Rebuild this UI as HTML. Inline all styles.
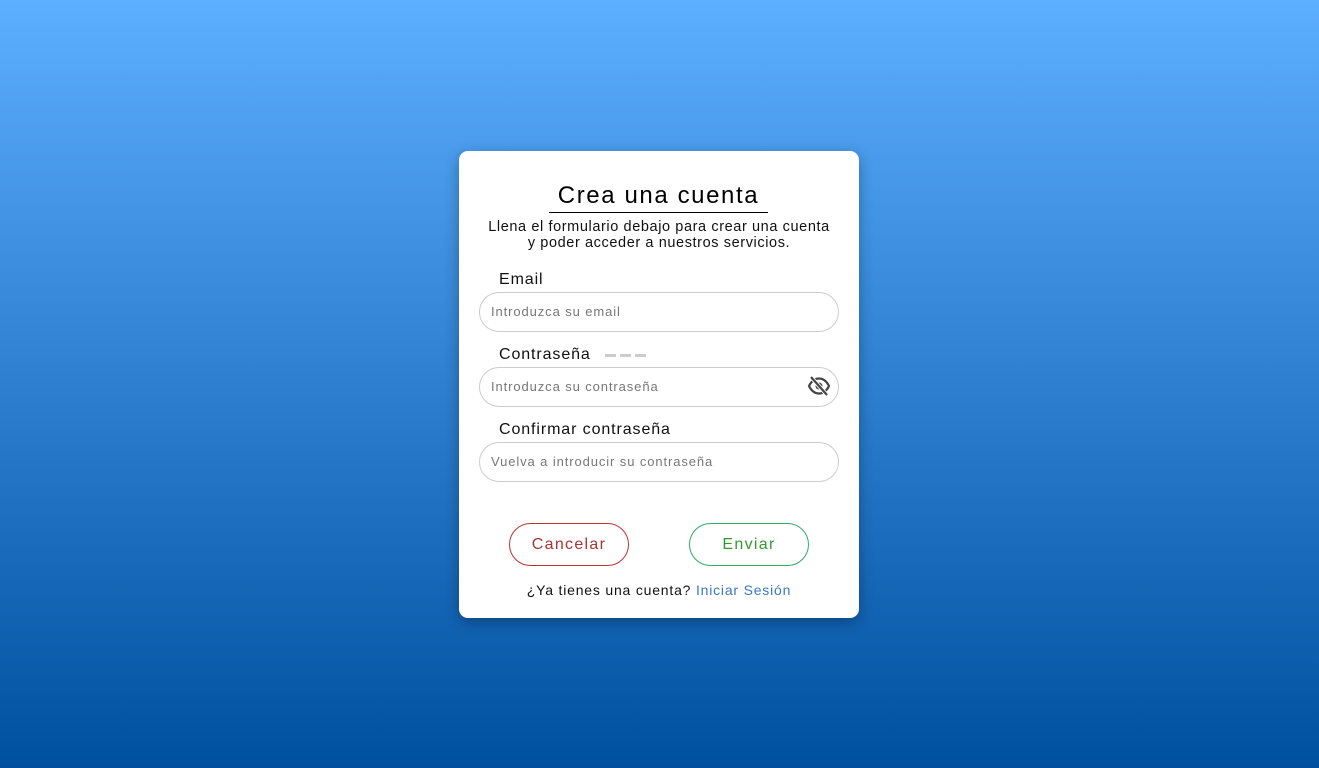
<!DOCTYPE html>
<html><head><meta charset="utf-8"><style>
*{box-sizing:border-box;margin:0;padding:0}
body{width:1319px;height:768px;overflow:hidden;background:linear-gradient(#5caeff,#0050a0);font-family:"Liberation Sans",sans-serif;position:relative}
.card{position:absolute;left:459px;top:151px;width:400px;height:467px;background:#fff;border-radius:9px;box-shadow:0 4px 14px rgba(0,0,0,.3)}
.t{position:absolute;top:180px;left:549px;width:219px;text-align:center;font-size:24px;letter-spacing:1.6px;color:#000;height:33px;border-bottom:1px solid #000;line-height:32px}
.s{position:absolute;top:219px;left:459px;width:400px;text-align:center;font-size:14.5px;letter-spacing:0.6px;line-height:16px;color:#111}
.l{position:absolute;left:499px;font-size:16px;letter-spacing:0.9px;color:#111}
.i{position:absolute;left:479px;width:360px;height:40px;border:1px solid #ccc;border-radius:20px;font-size:13px;letter-spacing:0.9px;color:#777;padding-left:11px;line-height:38px}
.b{position:absolute;top:523px;width:120px;height:43px;border-radius:22px;font-size:16px;letter-spacing:1.3px;text-align:center;line-height:41px}
.dash{position:absolute;top:354px;width:11px;height:3px;background:#ccc}
</style></head><body>
<div class="card"></div>
<div class="t">Crea una cuenta</div>
<div class="s">Llena el formulario debajo para crear una cuenta<br>y poder acceder a nuestros servicios.</div>
<div class="l" style="top:271px">Email</div>
<div class="i" style="top:292px">Introduzca su email</div>
<div class="l" style="top:346px">Contraseña</div>
<div class="dash" style="left:605px"></div><div class="dash" style="left:620px"></div><div class="dash" style="left:635px"></div>
<div class="i" style="top:367px">Introduzca su contraseña</div>
<svg style="position:absolute;left:807px;top:375px" width="24" height="22" viewBox="0 0 24 22"><path d="M2 11C5 5 9 3.5 12 3.5S19 5 22 11C19 17 15 18.5 12 18.5S5 17 2 11Z" fill="none" stroke="#444" stroke-width="2.2"/><circle cx="12" cy="11" r="3.5" fill="#444"/><path d="M4 2L20 20" stroke="#fff" stroke-width="4"/><path d="M4 2L20 20" stroke="#444" stroke-width="2.2"/></svg>
<div class="l" style="top:421px">Confirmar contraseña</div>
<div class="i" style="top:442px">Vuelva a introducir su contraseña</div>
<div class="b" style="left:509px;border:1px solid #b33;color:#a33">Cancelar</div>
<div class="b" style="left:689px;border:1px solid #3a6;color:#393">Enviar</div>
<div style="position:absolute;top:582px;left:459px;width:400px;text-align:center;font-size:14px;letter-spacing:0.8px;color:#111">¿Ya tienes una cuenta? <span style="color:#3a78c0">Iniciar Sesión</span></div>
</body></html>
